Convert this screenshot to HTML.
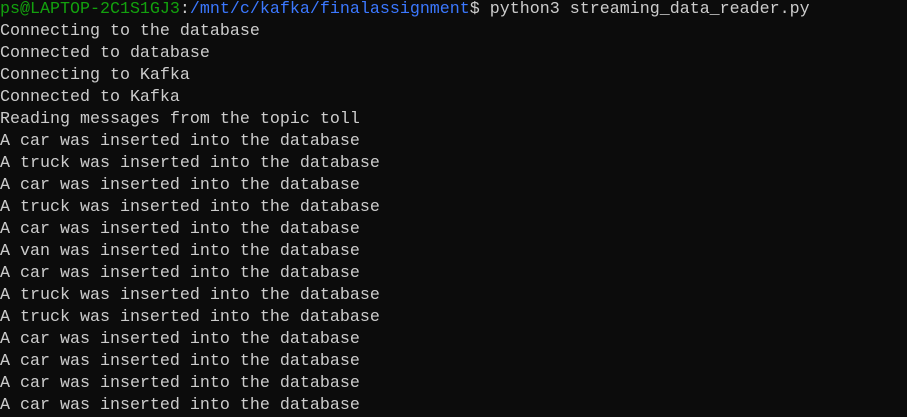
<!DOCTYPE html><html><head><style>
html,body{margin:0;background:#0c0c0c;width:907px;height:400px;overflow:hidden}
pre{margin:0;position:absolute;top:-1px;left:0;font-family:"Liberation Mono",monospace;font-size:16.67px;line-height:22px;color:#cccccc}
.g{color:#13a10e}.b{color:#3b78ff}
</style></head><body><pre><span class="g">ps@LAPTOP-2C1S1GJ3</span>:<span class="b">/mnt/c/kafka/finalassignment</span>$ python3 streaming_data_reader.py
Connecting to the database
Connected to database
Connecting to Kafka
Connected to Kafka
Reading messages from the topic toll
A car was inserted into the database
A truck was inserted into the database
A car was inserted into the database
A truck was inserted into the database
A car was inserted into the database
A van was inserted into the database
A car was inserted into the database
A truck was inserted into the database
A truck was inserted into the database
A car was inserted into the database
A car was inserted into the database
A car was inserted into the database
A car was inserted into the database</pre></body></html>
